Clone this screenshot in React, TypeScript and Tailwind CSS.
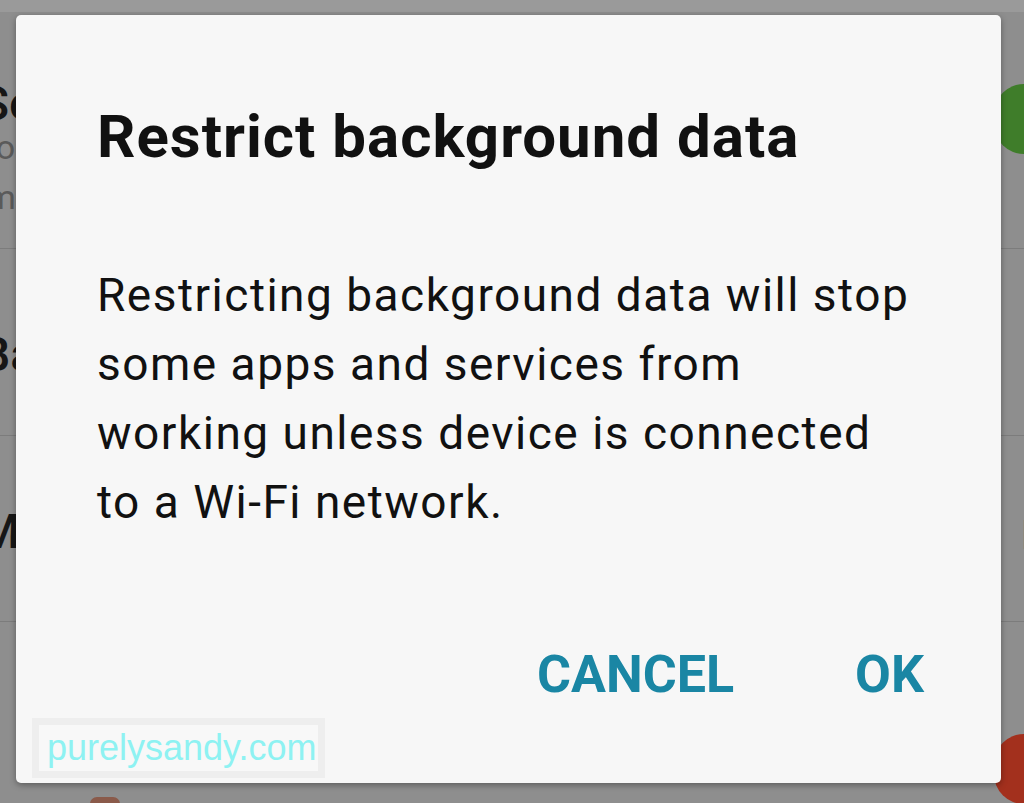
import React from "react";

export default function App() {
  return (
    <div className="relative w-[1024px] h-[803px] overflow-hidden bg-[#8e8e8e]" style={{ fontFamily: "Roboto, 'Noto Sans', sans-serif" }}>
      {/* background settings list (dimmed) */}
      <div className="flex flex-col h-full border-t-[12px] border-[#9a9a9a] text-[#1a1a1a]">
        <div className="h-[236px] relative">
          <div className="absolute left-[-20px] top-[56px] text-[48px] font-medium text-[#161616]">Se</div>
          <div className="absolute left-[-34px] top-[110px] text-[34px] text-[#5a5a5a]">Mo</div>
          <div className="absolute left-[-14px] top-[160px] text-[34px] text-[#5a5a5a]">m</div>
          <div className="absolute right-[-30px] top-[72px] w-[60px] h-[70px] rounded-full bg-[#3f7d2a]" />
        </div>
        <div className="h-px bg-[#7c7c7c]" />
        <div className="h-[186px] relative">
          <div className="absolute left-[-20px] top-[70px] text-[48px] font-medium text-[#161616]">Ba</div>
        </div>
        <div className="h-px bg-[#7c7c7c]" />
        <div className="h-[185px] relative">
          <div className="absolute left-[-22px] top-[60px] text-[48px] font-medium text-[#161616]">M</div>
          <div className="absolute right-[-22px] top-[70px] text-[40px] text-[#161616]">K</div>
        </div>
        <div className="h-px bg-[#7c7c7c]" />
        <div className="flex-1 relative">
          <div className="absolute right-[-30px] top-[112px] w-[60px] h-[70px] rounded-full bg-[#a3301d]" />
          <div className="absolute left-[90px] bottom-[-8px] w-[30px] h-[14px] rounded-full bg-[#8a5a4a]" />
        </div>
      </div>

      {/* dialog */}
      <div className="absolute left-[16px] top-[15px] w-[985px] h-[768px] rounded-[5px] bg-[#f7f7f7] shadow-[0_2px_6px_rgba(0,0,0,0.35)] flex flex-col">
        <div className="pl-[81px] pt-[92px] text-[60px] font-bold leading-none text-[#111] tracking-[1px]">
          Restrict background data
        </div>
        <div className="pl-[81px] pt-[94px] text-[46px] leading-[69px] text-[#111] tracking-[1.5px]">
          <div>Restricting background data will stop</div>
          <div>some apps and services from</div>
          <div>working unless device is connected</div>
          <div>to a Wi-Fi network.</div>
        </div>
        <div className="flex justify-end items-center gap-[121px] pr-[77px] mt-[112px] text-[52px] font-bold leading-none text-[#1a86a4]">
          <span>CANCEL</span>
          <span>OK</span>
        </div>
        <div className="mt-auto mb-[5px] ml-[16px] w-[293px] h-[60px] bg-[#eeeeee] p-[7px] flex">
          <div className="flex-1 bg-[#f8f8f8] flex items-center pl-[8px] text-[36px] leading-none text-[#8ef2f2]" style={{ fontFamily: "'Liberation Sans', Arial, sans-serif" }}>
            purelysandy.com
          </div>
        </div>
      </div>
    </div>
  );
}
